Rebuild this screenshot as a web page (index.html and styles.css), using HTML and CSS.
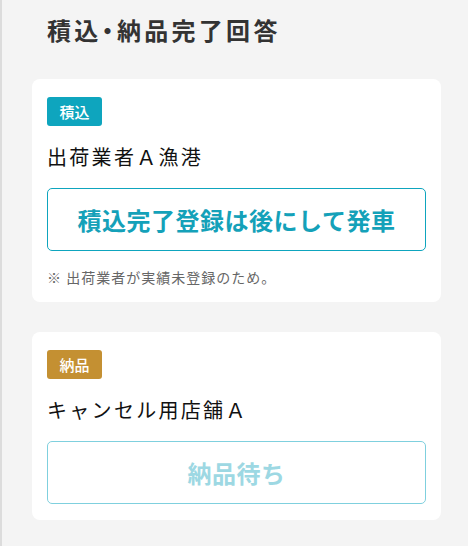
FILE: index.html
```html
<!DOCTYPE html>
<html lang="ja">
    <head>
        <meta charset="utf-8">
        <title>積込・納品完了回答</title>
        <link rel="stylesheet" href="styles.css">
    </head>
    <body>
        <div id="page">
            <h1 class="title">積込<span class="dot">・</span>納品完了回答</h1>

            <div class="card">
                <span class="badge badge-load">積込</span>
                <div class="name">出荷業者Ａ漁港</div>
                <button class="action">積込完了登録は後にして発車</button>
                <div class="note">※ 出荷業者が実績未登録のため。</div>
            </div>

            <div class="card">
                <span class="badge badge-deliver">納品</span>
                <div class="name">キャンセル用店舗Ａ</div>
                <button class="action waiting" aria-disabled="true">納品待ち</button>
            </div>
        </div>
    </body>
</html>
```

FILE: styles.css
```css
html, body{
    margin: 0;
    padding: 0;
    background-color: #f4f4f4;
}

body{
    font-family: "Noto Sans CJK JP", "Noto Sans", sans-serif;
}

#page{
    min-height: 546px;
    box-sizing: border-box;
    border-left: 2px solid #dcdcdc;
    padding: 12px 27px 20px 30px;
}

.title{
    margin: 0 0 31px 0;
    padding-left: 15px;
    font-size: 24px;
    line-height: 36px;
    font-weight: bold;
    letter-spacing: 3.3px;
    color: #333;
}

.title .dot{
    font-feature-settings: "halt";
}

.card{
    background-color: #fff;
    border-radius: 8px;
    padding: 18px 15px 15px 15px;
    margin-bottom: 30px;
}

.card:last-child{
    padding-bottom: 16px;
}

.badge{
    display: inline-block;
    width: 55px;
    box-sizing: border-box;
    padding: 4px 0;
    text-align: center;
    font-size: 15px;
    line-height: 21px;
    font-weight: 500;
    color: #fff;
    border-radius: 3px;
    vertical-align: top;
}

.badge-load{
    background-color: #0ea5be;
}

.badge-deliver{
    background-color: #c49032;
}

.name{
    margin-top: 16px;
    font-size: 20px;
    line-height: 30px;
    letter-spacing: 2.3px;
    color: #111;
}

.action{
    display: block;
    width: 100%;
    height: 63px;
    margin-top: 16px;
    background-color: #fff;
    border: 1px solid #0ea5be;
    border-radius: 5px;
    font-family: inherit;
    font-size: 24px;
    font-weight: bold;
    letter-spacing: 0.5px;
    color: #14a1b9;
    cursor: pointer;
}

.action.waiting{
    border: 1px solid #7fd0de;
    color: #9dd8e3;
    cursor: default;
}

.note{
    margin-top: 16px;
    font-size: 14px;
    line-height: 20px;
    letter-spacing: 1px;
    color: #666;
}
```
